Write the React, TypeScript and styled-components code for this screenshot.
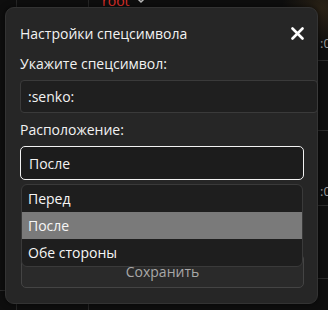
import React from 'react'
import styled, { createGlobalStyle } from 'styled-components'

const GlobalStyle = createGlobalStyle`
  html, body {
    margin: 0;
    padding: 0;
    background: #0e0e0e;
    font-family: "Open Sans", "Noto Sans", sans-serif;
  }
`;

// the editor canvas behind the modal: grid lines drawn as background layers
const line = (c: string) => `linear-gradient(${c}, ${c})`;
const Canvas = styled.div`
  position: relative;
  width: 328px;
  height: 310px;
  overflow: hidden;
  background:
    ${line('#262626')} 16px 0 / 1px 100% no-repeat,
    ${line('#262626')} 88px 0 / 1px 100% no-repeat,
    ${line('#2a2a2a')} 305px 60px / 23px 1px no-repeat,
    ${line('#2a2a2a')} 305px 130px / 23px 1px no-repeat,
    ${line('#2a2a2a')} 305px 205px / 23px 1px no-repeat,
    ${line('#2a2a2a')} 305px 278px / 23px 1px no-repeat,
    ${line('#2a2a2a')} 0 290px / 16px 1px no-repeat,
    radial-gradient(circle at 322px 8px, #2a2216 0, #0e0e0e 40px);
`;

const RootTag = styled.div`
  position: absolute;
  left: 102px;
  top: -9px;
  display: flex;
  align-items: center;
  gap: 6px;
  color: #e0302a;
  font-size: 14px;
`;

const EdgeNote = styled.div`
  position: absolute;
  left: 320px;
  top: 34px;
  display: flex;
  flex-direction: column;
  gap: 130px;
  color: #9a9a9a;
  font-size: 13px;
`;

const Dialog = styled.div`
  position: absolute;
  left: 5px;
  top: 7px;
  width: 313px;
  height: 297px;
  box-sizing: border-box;
  padding: 15px 13px 15px 14px;
  background: #262626;
  border: 1px solid #333;
  border-radius: 9px;
  box-shadow: 0 0 6px rgba(0, 0, 0, 0.6);
  display: flex;
  flex-direction: column;
  color: #f2f2f2;
  font-weight: 500;
`;

const Header = styled.div`
  display: flex;
  align-items: center;
  justify-content: space-between;
  height: 20px;
`;

const Title = styled.div`
  font-size: 14px;
`;

const Close = styled.button`
  border: 0;
  background: none;
  padding: 0;
  margin-right: -1px;
  width: 16px;
  height: 16px;
  display: flex;
  align-items: center;
  justify-content: center;
  cursor: pointer;
`;

const Label = styled.div<{ $gap: number }>`
  font-size: 14px;
  line-height: 20px;
  margin-top: ${p => p.$gap}px;
`;

const TextInput = styled.div`
  box-sizing: border-box;
  margin-top: 6px;
  margin-right: -14px;
  height: 33px;
  padding: 0 7px;
  display: flex;
  align-items: center;
  background: #1f1f1f;
  border: 1px solid #3a3a3a;
  border-radius: 4px;
  font-size: 14px;
`;

const SelectWrap = styled.div`
  position: relative;
  margin-top: 6px;
`;

const SelectBox = styled.div`
  box-sizing: border-box;
  height: 34px;
  padding: 0 8px;
  display: flex;
  align-items: center;
  background: #1c1c1c;
  border: 1px solid #f2f2f2;
  border-radius: 5px;
  font-size: 14px;
`;

const Menu = styled.ul`
  position: absolute;
  left: 1px;
  right: 1px;
  top: 38px;
  margin: 0;
  padding: 0;
  list-style: none;
  background: #1e1e1e;
  border: 1px solid #3a3a3a;
  border-radius: 6px;
  overflow: hidden;
  z-index: 2;
`;

const Item = styled.li<{ $active?: boolean }>`
  height: 27px;
  padding: 0 6px;
  display: flex;
  align-items: center;
  font-size: 14px;
  color: #f6f6f6;
  background: ${p => (p.$active ? '#7a7a7a' : 'transparent')};
`;

const SaveButton = styled.button`
  margin-top: auto;
  margin-left: 1px;
  height: 34px;
  padding: 0;
  background: #2a2a2a;
  border: 1px solid #444;
  border-radius: 5px;
  color: #a8a8a8;
  font-family: inherit;
  font-weight: 500;
  font-size: 14px;
  display: flex;
  align-items: center;
  justify-content: center;
`;

const options = ['Перед', 'После', 'Обе стороны'];

export default function App() {
  const [value] = React.useState('После');
  return (
    <>
      <GlobalStyle />
      <Canvas>
        <RootTag>
          root
          <svg width="10" height="7" viewBox="0 0 10 7">
            <path d="M1 1l4 4 4-4" fill="none" stroke="#bbb" strokeWidth="1.5" />
          </svg>
        </RootTag>
        <EdgeNote>
          <span>:0</span>
          <span>:0</span>
        </EdgeNote>

        <Dialog>
          <Header>
            <Title>Настройки спецсимвола</Title>
            <Close aria-label="close">
              <svg width="13" height="13" viewBox="0 0 13 13">
                <path d="M1.5 1.5l10 10M11.5 1.5l-10 10" stroke="#fff" strokeWidth="2.6" strokeLinecap="round" />
              </svg>
            </Close>
          </Header>
          <Label $gap={11}>Укажите спецсимвол:</Label>
          <TextInput>:senko:</TextInput>
          <Label $gap={7}>Расположение:</Label>
          <SelectWrap>
            <SelectBox>{value}</SelectBox>
            <Menu>
              {options.map(o => (
                <Item key={o} $active={o === value}>{o}</Item>
              ))}
            </Menu>
          </SelectWrap>
          <SaveButton>Сохранить</SaveButton>
        </Dialog>
      </Canvas>
    </>
  );
}
